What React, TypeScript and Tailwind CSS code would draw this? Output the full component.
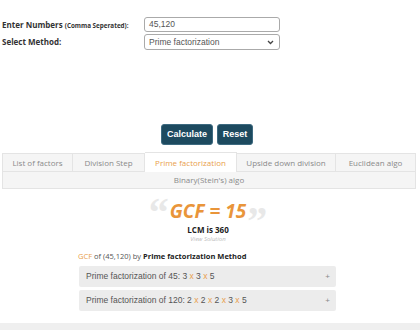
import React from "react";

const os = { fontFamily: '"Open Sans", "Liberation Sans", sans-serif' };
const ar = { fontFamily: '"Liberation Sans", Arial, sans-serif' };

function X() {
  return <span className="text-[#e9a04c]"> x </span>;
}

export default function App() {
  return (
    <div className="w-[420px] h-[330px] bg-white relative overflow-hidden" style={os}>
      <div className="pt-[17px] flex flex-col gap-[2px]">
        <div className="flex items-center h-[15px]">
          <div className="w-[144px] pl-[2px] text-[8px] font-bold text-[#333]">
            Enter Numbers <span className="text-[6.3px]">(Comma Seperated):</span>
          </div>
          <div className="w-[136px] h-[15px] border border-[#aaa] rounded-[3px] flex items-center pl-[4px] text-[8.5px] text-[#555]" style={ar}>
            45,120
          </div>
        </div>
        <div className="flex items-center h-[16px]">
          <div className="w-[144px] pl-[2px] text-[8px] font-bold text-[#333]">Select Method:</div>
          <div className="w-[136px] h-[16px] border border-[#aaa] rounded-[3px] flex items-center justify-between pl-[4px] pr-[5px] text-[8.5px] text-[#555]" style={ar}>
            <span>Prime factorization</span>
            <svg width="7" height="5" viewBox="0 0 7 5"><path d="M1 1 L3.5 3.5 L6 1" stroke="#444" strokeWidth="1.3" fill="none" /></svg>
          </div>
        </div>
      </div>

      <div className="mt-[74px] flex justify-center gap-[4px] pr-[6px]">
        <div className="w-[52px] h-[21px] bg-[#1d4a5f] border border-[#3d6a80] rounded-[3px] text-white text-[9px] font-bold flex items-center justify-center" style={ar}>Calculate</div>
        <div className="w-[36px] h-[21px] bg-[#1d4a5f] border border-[#3d6a80] rounded-[3px] text-white text-[9px] font-bold flex items-center justify-center" style={ar}>Reset</div>
      </div>

      <div className="mt-[7px] mx-[2px] w-[414px]">
        <div className="flex h-[20px] text-[8px] text-[#8a8a8a]">
          <div className="w-[71px] bg-[#f5f5f5] border border-[#e4e4e4] mt-[1px] flex items-center justify-center">List of factors</div>
          <div className="w-[72px] bg-[#f5f5f5] border border-l-0 border-[#e4e4e4] mt-[1px] flex items-center justify-center">Division Step</div>
          <div className="w-[92px] bg-white border border-l-0 border-b-0 border-[#e4e4e4] flex items-center justify-center text-[#e9a04c]">Prime factorization</div>
          <div className="w-[99px] bg-[#f5f5f5] border border-l-0 border-[#e4e4e4] mt-[1px] flex items-center justify-center">Upside down division</div>
          <div className="w-[80px] bg-[#f5f5f5] border border-l-0 border-[#e4e4e4] mt-[1px] flex items-center justify-center">Euclidean algo</div>
        </div>
        <div className="h-[17px] bg-[#f5f5f5] border border-t-0 border-[#e4e4e4] flex items-center justify-center text-[8px] text-[#8a8a8a]">
          Binary(Stein's) algo
        </div>
      </div>

      <div className="mt-[6px] flex flex-col items-center pr-[4px]">
        <div className="flex items-start h-[28px]">
          <span className="text-[40px] leading-[40px] text-[#e8e8e8] font-bold -mt-[2px] mr-[1px]" style={{ fontFamily: '"Liberation Serif", serif' }}>“</span>
          <span className="text-[19px] leading-[28px] font-bold italic text-[#e9953a] mt-[2px]">GCF = 15</span>
          <span className="text-[40px] leading-[40px] text-[#e8e8e8] font-bold mt-[6px] ml-[1px]" style={{ fontFamily: '"Liberation Serif", serif' }}>”</span>
        </div>
        <div className="text-[8px] font-bold text-[#222] leading-[10px] mt-[2px]">LCM is 360</div>
        <div className="text-[6px] italic text-[#bbb] leading-[8px]">View Solution</div>
      </div>

      <div className="mt-[8px] pl-[78px] text-[7.5px] text-[#555] leading-[10px]">
        <span className="text-[#e9a04c]">GCF</span> of (45,120) by <span className="font-bold text-[#222]">Prime factorization Method</span>
      </div>

      <div className="mt-[5px] ml-[79px] w-[257px] flex flex-col gap-[3px] text-[8.5px] text-[#555]" style={ar}>
        <div className="h-[21px] bg-[#ececec] rounded-[2px] flex items-center justify-between pl-[7px] pr-[6px]">
          <span>Prime factorization of 45: 3<X />3<X />5</span>
          <span className="text-[#888] text-[8px]">+</span>
        </div>
        <div className="h-[21px] bg-[#ececec] rounded-[2px] flex items-center justify-between pl-[7px] pr-[6px]">
          <span>Prime factorization of 120: 2<X />2<X />2<X />3<X />5</span>
          <span className="text-[#888] text-[8px]">+</span>
        </div>
      </div>

      <div className="absolute left-0 right-0 bottom-0 h-[7px] bg-[#efefef]" />
    </div>
  );
}
